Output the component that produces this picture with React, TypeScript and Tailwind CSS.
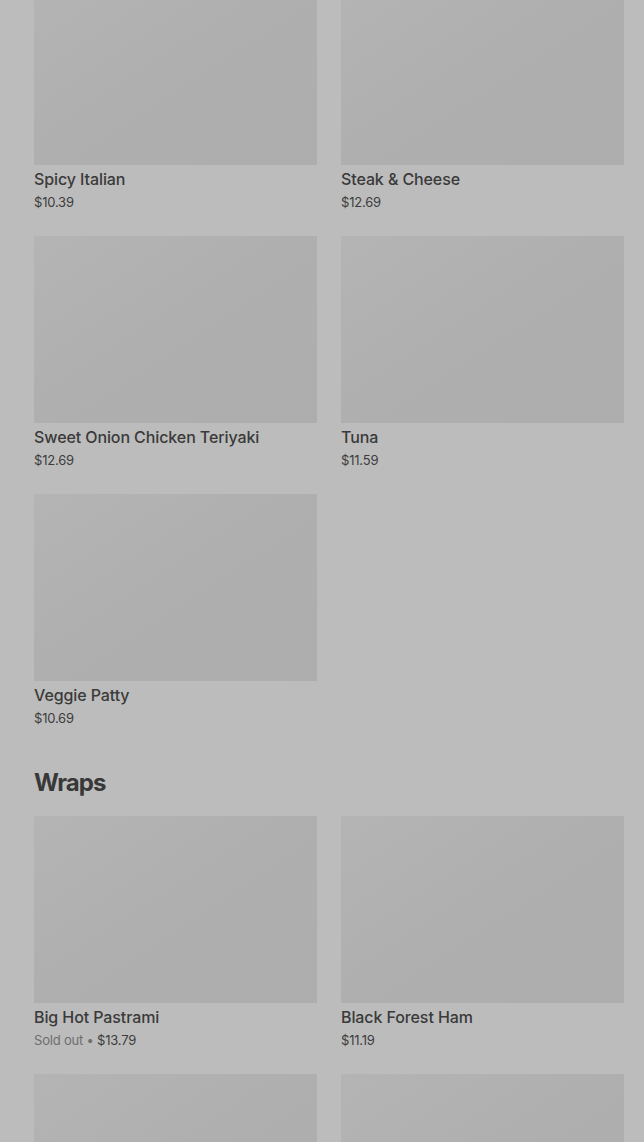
type Item = { name?: string; price?: string; soldOut?: boolean };

const sections: { title: string | null; items: Item[] }[] = [
  {
    title: null,
    items: [
      { name: "Spicy Italian", price: "$10.39" },
      { name: "Steak & Cheese", price: "$12.69" },
      { name: "Sweet Onion Chicken Teriyaki", price: "$12.69" },
      { name: "Tuna", price: "$11.59" },
      { name: "Veggie Patty", price: "$10.69" },
    ],
  },
  {
    title: "Wraps",
    items: [
      { name: "Big Hot Pastrami", price: "$13.79", soldOut: true },
      { name: "Black Forest Ham", price: "$11.19" },
      {},
      {},
    ],
  },
];

const App = () => {
  return (
    <div className="h-[1142px] overflow-hidden bg-[#bcbcbc] font-['Inter',sans-serif] text-[#3a3a3a]">
      <div className="-mt-[22px] pl-[34px] pr-[20px]">
        {sections.map((section, index) => (
          <section key={index}>
            {section.title && (
              <h2 className="mt-[40px] mb-[17px] text-[24px] leading-[32px] font-bold tracking-[-0.9px] text-[#383838]">
                {section.title}
              </h2>
            )}
            <div className="grid grid-cols-2 gap-x-[24px] gap-y-[25px]">
              {section.items.map((item, itemIndex) => (
                <div key={itemIndex}>
                  <div className="h-[187px] bg-gradient-to-br from-[#b4b4b4] via-[#afafaf] to-[#adadad]"></div>
                  {item.name && (
                    <>
                      <h3 className="mt-[4px] text-[16px] leading-[20px] font-medium tracking-[-0.1px] text-[#3a3a3a]">
                        {item.name}
                      </h3>
                      <p className="mt-[4px] text-[13px] leading-[18px] tracking-[-0.2px] text-[#3c3c3c]">
                        {item.soldOut && <span className="text-[#6e6e6e]">Sold out • </span>}
                        {item.price}
                      </p>
                    </>
                  )}
                </div>
              ))}
            </div>
          </section>
        ))}
      </div>
    </div>
  );
};

export default App;
